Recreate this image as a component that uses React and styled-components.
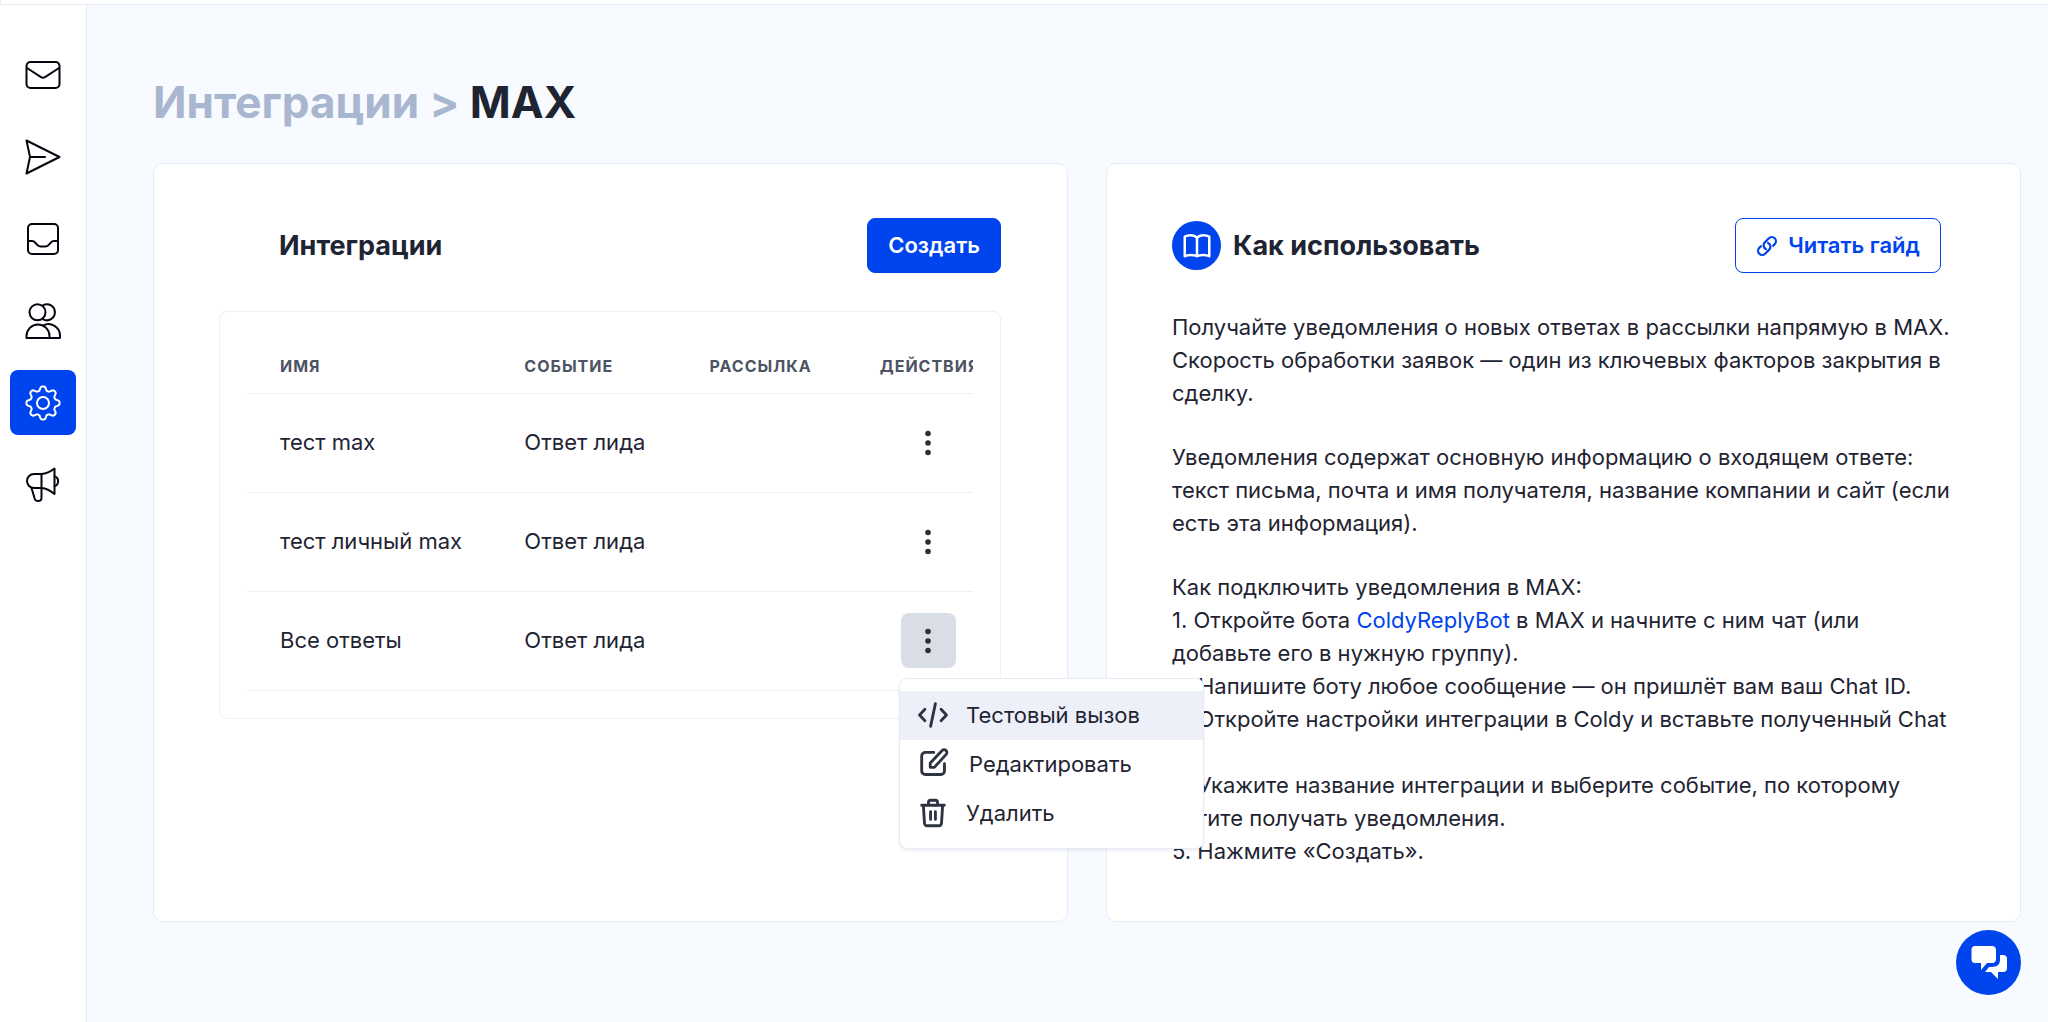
import React, { useState } from 'react'
import styled, { createGlobalStyle, css } from "styled-components";

const GlobalStyle = createGlobalStyle`
    * {
        box-sizing: border-box;
    }
    body {
        margin: 0;
        background: #f7fafe;
        color: #1f2433;
        font-family: Inter, "Liberation Sans", sans-serif;
        font-size: 22px;
        line-height: 33px;
    }
    button, a {
        font: inherit;
    }
`;

const Page = styled.div`
    min-height: 100vh;
    display: flex;
    flex-direction: column;
`;

const TopBar = styled.header`
    height: 5px;
    background: #fff;
    border-bottom: 1px solid #e6ebf5;
    border-left: 1px solid #e6ebf5;
`;

const Body = styled.div`
    flex: 1;
    display: flex;
`;

const Sidebar = styled.nav`
    flex: none;
    width: 87px;
    padding: 37px 10px;
    display: flex;
    flex-direction: column;
    gap: 17px;
    background: #fff;
    border-right: 1px solid #e6ebf5;
`;

const NavLink = styled.a`
    height: 65px;
    display: flex;
    align-items: center;
    justify-content: center;
    border-radius: 8px;
    color: ${props => props.$active ? "#fff" : "#05060f"};
    background: ${props => props.$active ? "#0044ee" : "transparent"};
`;

const Main = styled.main`
    flex: 1;
    min-width: 0;
    padding: 70px 27px 0 66px;
`;

const Title = styled.h1`
    margin: 0 0 34px;
    font-size: 44px;
    line-height: 54px;
    font-weight: 700;
`;

const Crumb = styled.a`
    color: #a9b6cf;
    text-decoration: none;
`;

const Columns = styled.div`
    display: grid;
    grid-template-columns: 1fr 1fr;
    gap: 38px;
`;

const Card = styled.section`
    min-width: 0;
    padding: 54px 66px 53px 65px;
    background: #fff;
    border: 1px solid #e6ebf5;
    border-radius: 10px;
`;

const CardHead = styled.div`
    display: flex;
    align-items: center;
    gap: 12px;
    padding: ${props => props.$inset ? "0 0 0 60px" : "0 13px 0 0"};
    margin-bottom: 38px;
`;

const CardTitle = styled.h2`
    flex: 1;
    margin: 0;
    font-size: 27px;
    line-height: 36px;
    font-weight: 700;
`;

const buttonBase = css`
    height: 55px;
    padding: 0 20px;
    display: flex;
    align-items: center;
    gap: 10px;
    border: 1px solid #0044ee;
    border-radius: 8px;
    font-weight: 600;
    cursor: pointer;
`;

const PrimaryButton = styled.button`
    ${buttonBase}
    background: #0044ee;
    color: #fff;
`;

const OutlineLink = styled.a`
    ${buttonBase}
    color: #0044ee;
    text-decoration: none;
`;

const BookBadge = styled.span`
    width: 49px;
    height: 49px;
    display: flex;
    align-items: center;
    justify-content: center;
    border-radius: 50%;
    background: #0044ee;
    color: #fff;
`;

const TableBox = styled.div`
    position: relative;
    padding: 27px;
    border: 1px solid #edf0f8;
    border-radius: 8px;
`;

const TableClip = styled.div`
    overflow: hidden;
`;

const Table = styled.table`
    width: 102%;
    table-layout: fixed;
    border-collapse: collapse;
    text-align: left;
`;

const Th = styled.th`
    width: ${props => props.$width};
    height: 54px;
    padding: 0 0 0 33px;
    border-bottom: 1px solid #edf0f8;
    font-size: 16px;
    line-height: 22px;
    font-weight: 700;
    letter-spacing: 1px;
    text-transform: uppercase;
    white-space: nowrap;
    color: #4d5363;
`;

const Td = styled.td`
    height: 99px;
    padding: 0 0 0 33px;
    border-bottom: 1px solid #edf0f8;
`;

const DotsButton = styled.button`
    width: 55px;
    height: 55px;
    margin-left: 21px;
    padding: 0;
    display: flex;
    align-items: center;
    justify-content: center;
    border: 0;
    border-radius: 8px;
    background: ${props => props.$open ? "#d8dde6" : "transparent"};
    color: #2a2f3d;
    cursor: pointer;
`;

const Menu = styled.div`
    position: absolute;
    z-index: 2;
    top: calc(100% - 40px);
    left: calc(100% - 101px);
    width: 305px;
    padding: 12px 0 10px;
    background: #fff;
    border: 1px solid #e6ebf5;
    border-radius: 8px;
    box-shadow: 0 2px 3px rgba(40, 60, 110, .08);
`;

const MenuItem = styled.button`
    width: 100%;
    height: 49px;
    padding: 0 16px;
    display: flex;
    align-items: center;
    gap: 16px;
    border: 0;
    background: ${props => props.$active ? "#edf0f8" : "transparent"};
    color: #1f2433;
    text-align: left;
    cursor: pointer;

    svg {
        color: #2d3342;
    }
`;

const Guide = styled.div`
    display: flex;
    flex-direction: column;
    gap: 31px;
`;

const Paragraph = styled.p`
    margin: 0;
`;

const BotLink = styled.a`
    color: #0044ee;
    text-decoration: none;
`;

const ChatButton = styled.button`
    position: fixed;
    right: 27px;
    bottom: 27px;
    width: 65px;
    height: 65px;
    padding: 0;
    display: flex;
    align-items: center;
    justify-content: center;
    border: 0;
    border-radius: 50%;
    background: #0044ee;
    color: #fff;
    cursor: pointer;
`;

function Icon({ size = 36, box = 36, width = 2, children }) {
    return (
        <svg width={size} height={size} viewBox={`0 0 ${box} ${box}`} fill="none" stroke="currentColor"
            strokeWidth={width} strokeLinecap="round" strokeLinejoin="round" aria-hidden="true">
            {children}
        </svg>
    )
}

// eight-toothed outline for the settings icon
const gearPath = () => {
    const points = [];
    for (let i = 0; i <= 160; i++) {
        const a = i / 160 * Math.PI * 2;
        const r = 14.6 + 2.2 * Math.tanh(1.5 * Math.cos(8 * a));
        points.push(`${(18 + r * Math.sin(a)).toFixed(2)} ${(18 - r * Math.cos(a)).toFixed(2)}`);
    }
    return `M${points.join("L")}Z`;
};

const navItems = [
    {
        label: "Почты",
        icon: <Icon><rect x="1.5" y="5" width="33" height="26" rx="4" /><path d="M2 11L16 20.2Q18 21.4 20 20.2L34 11" /></Icon>
    },
    {
        label: "Рассылки",
        icon: <Icon><path d="M1.5 1.5L34.5 18L1.5 34.5L5 18Z" /><path d="M5 18H20" /></Icon>
    },
    {
        label: "Входящие",
        icon: <Icon><rect x="3" y="3" width="30" height="30" rx="4" /><path d="M3 20H7Q9 20 10 21.5L13 24.6Q14 25.5 15.5 25.5H20.5Q22 25.5 23 24.6L26 21.5Q27 20 29 20H33" /></Icon>
    },
    {
        label: "Контакты",
        icon: <Icon><circle cx="12.5" cy="9.3" r="8" /><path d="M18.2 2.2A8 8 0 1 1 18.2 16.4" /><path d="M1.5 35V33A11.5 11.5 0 0 1 24.5 33V35Z" /><path d="M18 22.6A11.5 11.5 0 0 1 35 33V35H24.5" /></Icon>
    },
    {
        label: "Настройки",
        active: true,
        icon: <Icon><path d={gearPath()} /><circle cx="18" cy="18" r="6" /></Icon>
    },
    {
        label: "Новости",
        icon: <Icon><path d="M16.5 7H9A7 7 0 0 0 9 21H16.5Z" /><path d="M16.5 7Q23 6.5 29.5 1.5V27Q23 21.500 16.5 21" /><path d="M29.5 9.3A5.2 5.2 0 0 1 29.5 19.2" /><path d="M6.5 21L9.8 32Q10.6 34.1 13 34.1Q16.5 34.1 16.5 30.5V21" /></Icon>
    }
];

const rows = [
    { name: "тест max", event: "Ответ лида" },
    { name: "тест личный max", event: "Ответ лида" },
    { name: "Все ответы", event: "Ответ лида" }
];

const menuItems = [
    {
        label: "Тестовый вызов",
        icon: <Icon size={34} box={24}><path d="M6.3 8L2.5 12L6.3 16M17.7 8L21.5 12L17.7 16M13.7 4L10.3 20" /></Icon>
    },
    {
        label: "Редактировать",
        icon: <Icon size={37} box={26}><path d="M12.5 4.5H6.5A2.5 2.5 0 0 0 4 7V17.5A2.5 2.5 0 0 0 6.5 20H17.5A2.5 2.5 0 0 0 20 17.5V12.5" /><path d="M10 15V12L18.2 3.3A1.9 1.9 0 0 1 21.2 5.9L12.9 15Z" /></Icon>
    },
    {
        label: "Удалить",
        icon: <Icon size={34} box={24}><path d="M4 6.5H20M5.2 6.5L6 19.3A2 2 0 0 0 8 21H16A2 2 0 0 0 18 19.3L18.8 6.5M8.8 6.5V4.5A1.5 1.5 0 0 1 10.3 3H13.7A1.5 1.5 0 0 1 15.2 4.5V6.5M10.3 11V16.5M13.7 11V16.5" /></Icon>
    }
];

function App() {
    const [openRow, setOpenRow] = useState(2);

    const toggleMenu = index => {
        setOpenRow(openRow === index ? null : index);
    };

    return (
        <Page>
            <GlobalStyle />
            <TopBar />
            <Body>
                <Sidebar>
                    {navItems.map(item => (
                        <NavLink key={item.label} href="#" aria-label={item.label} $active={item.active}>
                            {item.icon}
                        </NavLink>
                    ))}
                </Sidebar>
                <Main>
                    <Title><Crumb href="#">Интеграции &gt;</Crumb> MAX</Title>
                    <Columns>
                        <Card>
                            <CardHead $inset>
                                <CardTitle>Интеграции</CardTitle>
                                <PrimaryButton type="button">Создать</PrimaryButton>
                            </CardHead>
                            <TableBox>
                                <TableClip>
                                    <Table>
                                        <thead>
                                            <tr>
                                                <Th $width="33%">Имя</Th>
                                                <Th $width="25%">Событие</Th>
                                                <Th $width="23%">Рассылка</Th>
                                                <Th $width="19%">Действия</Th>
                                            </tr>
                                        </thead>
                                        <tbody>
                                            {rows.map((row, index) => (
                                                <tr key={row.name}>
                                                    <Td>{row.name}</Td>
                                                    <Td>{row.event}</Td>
                                                    <Td />
                                                    <Td>
                                                        <DotsButton type="button" aria-label="Действия" $open={openRow === index}
                                                            onClick={() => toggleMenu(index)}>
                                                            <svg width="26" height="26" viewBox="0 0 26 26" fill="currentColor">
                                                                <circle cx="13" cy="3.5" r="2.8" />
                                                                <circle cx="13" cy="13" r="2.8" />
                                                                <circle cx="13" cy="22.5" r="2.8" />
                                                            </svg>
                                                        </DotsButton>
                                                    </Td>
                                                </tr>
                                            ))}
                                        </tbody>
                                    </Table>
                                </TableClip>
                                {openRow !== null && (
                                    <Menu>
                                        {menuItems.map((item, index) => (
                                            <MenuItem key={item.label} type="button" $active={index === 0}>
                                                {item.icon}{item.label}
                                            </MenuItem>
                                        ))}
                                    </Menu>
                                )}
                            </TableBox>
                        </Card>
                        <Card>
                            <CardHead>
                                <BookBadge>
                                    <Icon size={30} box={24}><path d="M12 5.5C10.8 4 8.8 3.4 6.8 3.4C5 3.4 3.4 3.8 2.2 4.5V20.2C3.4 19.5 5 19.1 6.8 19.1C8.8 19.1 10.8 19.3 12 20.2C13.2 19.3 15.2 19.1 17.2 19.1C19 19.1 20.6 19.5 21.8 20.2V4.5C20.6 3.8 19 3.4 17.2 3.4C15.2 3.4 13.2 4 12 5.5ZV20.2" /></Icon>
                                </BookBadge>
                                <CardTitle>Как использовать</CardTitle>
                                <OutlineLink href="#">
                                    <Icon size={22} box={24} width={2.4}><path d="M13.19 8.688a4.5 4.5 0 0 1 1.242 7.244l-4.5 4.5a4.5 4.5 0 0 1-6.364-6.364l1.757-1.757m13.35-.622 1.757-1.757a4.5 4.5 0 0 0-6.364-6.364l-4.5 4.5a4.5 4.5 0 0 0 1.242 7.244" /></Icon>
                                    Читать гайд
                                </OutlineLink>
                            </CardHead>
                            <Guide>
                                <Paragraph>
                                    Получайте уведомления о новых ответах в рассылки напрямую в MAX. Скорость обработки заявок — один из ключевых факторов закрытия в сделку.
                                </Paragraph>
                                <Paragraph>
                                    Уведомления содержат основную информацию о входящем ответе: текст письма, почта и имя получателя, название компании и сайт (если есть эта информация).
                                </Paragraph>
                                <Paragraph>
                                    Как подключить уведомления в MAX:<br />
                                    1. Откройте бота <BotLink href="#">ColdyReplyBot</BotLink> в MAX и начните с ним чат (или добавьте его в нужную группу).<br />
                                    2. Напишите боту любое сообщение — он пришлёт вам ваш Chat ID.<br />
                                    3. Откройте настройки интеграции в Coldy и вставьте полученный Chat ID.<br />
                                    4. Укажите название интеграции и выберите событие, по которому хотите получать уведомления.<br />
                                    5. Нажмите «Создать».
                                </Paragraph>
                            </Guide>
                        </Card>
                    </Columns>
                </Main>
            </Body>
            <ChatButton type="button" aria-label="Чат">
                <svg width="38" height="38" viewBox="0 0 38 38" fill="currentColor">
                    <path d="M5 2H22Q26 2 26 6V15Q26 19 22 19H17L11 26V19H5Q1.5 19 1.5 15V6Q1.5 2 5 2Z" />
                    <path d="M30 11H33Q37 11 37 15V24Q37 28 33 28H28V35L21 28H15L19 23H22Q30 23 30 16Z" />
                </svg>
            </ChatButton>
        </Page>
    )
}

export default App
